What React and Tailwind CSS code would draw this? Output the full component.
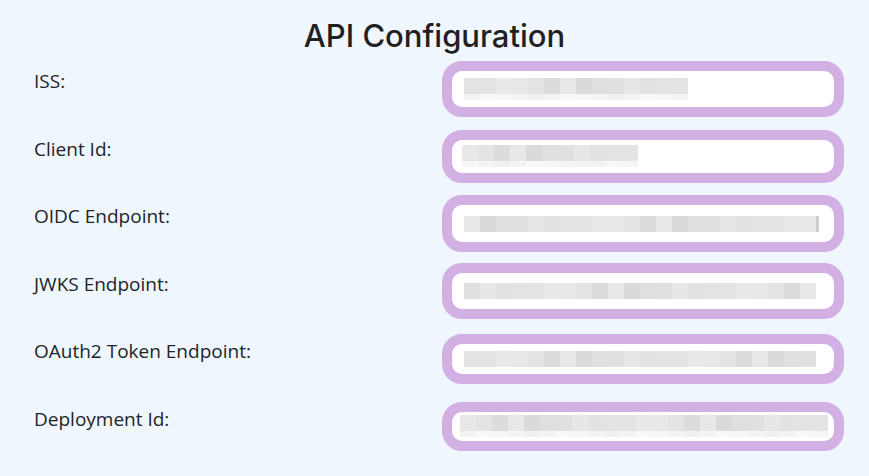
const fields = [
  { label: "ISS:", start: 12, count: 14, two: true, h: 56 },
  { label: "Client Id:", start: 10, count: 11, two: true, h: 53 },
  { label: "OIDC Endpoint:", start: 12, count: 22, edge: true, h: 57 },
  { label: "JWKS Endpoint:", start: 12, count: 22, h: 56 },
  { label: "OAuth2 Token Endpoint:", start: 12, count: 22, h: 50 },
  { label: "Deployment Id:", start: 8, count: 23, two: true, h: 49 },
];

const shades = [
  "#e3e3e3", "#dcdcdc", "#e6e7e8", "#e8e8e8", "#dfdfe0", "#e5e3e3",
  "#e7e8e9", "#e2e2e2", "#e4e4e5", "#e0e0e0", "#e9e9e9", "#dadada",
];
const lights = ["#f3f3f3", "#f6f6f6", "#f1f1f1", "#f8f8f8", "#f4f4f4"];

function Redacted({ start, count, two, edge, seed }) {
  return (
    <div className="flex flex-col" style={{ paddingLeft: start }}>
      <div className="flex">
        {Array.from({ length: count }).map((_, i) => (
          <div
            key={i}
            className="h-[16px] w-[16px]"
            style={{ background: shades[(i * 5 + seed * 3) % shades.length] }}
          />
        ))}
        {edge && <div className="h-[16px] w-[3px] bg-[#cfcfcf]" />}
      </div>
      {two && (
        <div className="flex">
          {Array.from({ length: count }).map((_, i) => (
            <div
              key={i}
              className="h-[6px] w-[16px]"
              style={{ background: lights[(i * 3 + seed) % lights.length] }}
            />
          ))}
        </div>
      )}
    </div>
  );
}

export default function App() {
  return (
    <div className="min-h-[476px] w-full bg-[#eff6fe] pt-[17px] pl-[34px] pr-[25px] font-['Open_Sans',sans-serif] text-[#212529]">
      <h1 className="-ml-[34px] -mr-[25px] text-center font-['Inter',sans-serif] text-[31px] font-medium leading-[38px] text-[#1f1f24]">
        API Configuration
      </h1>

      <div className="flex flex-col">
        {fields.map((f, idx) => (
          <div key={f.label} className="flex h-[67.5px] items-center justify-between">
            <label className="self-start pt-[12px] text-[19px] leading-[28px]">{f.label}</label>
            <div
              className="flex w-[402px] items-center overflow-hidden rounded-[20px] border-[10px] border-[#d2b0e4] bg-white"
              style={{ height: f.h }}
            >
              <Redacted {...f} seed={idx} />
            </div>
          </div>
        ))}
      </div>
    </div>
  );
}
